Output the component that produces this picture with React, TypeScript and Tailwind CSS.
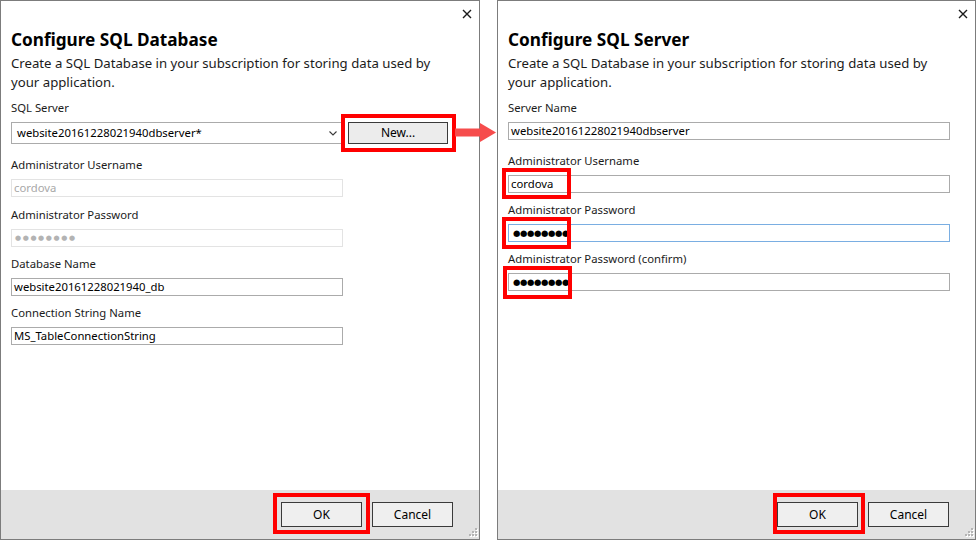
import React from "react";

const FONT = { fontFamily: '"Noto Sans", "Open Sans", sans-serif' };

function CloseX() {
  return (
    <svg width="10" height="10" viewBox="0 0 10 10" aria-hidden="true">
      <path d="M1 1 L9 9 M9 1 L1 9" stroke="#1a1a1a" strokeWidth="1.4" fill="none" />
    </svg>
  );
}

function Grip() {
  const dots: [number, number][] = [
    [9, 1],
    [6, 4],
    [9, 4],
    [3, 7],
    [6, 7],
    [9, 7],
  ];
  return (
    <svg className="absolute right-[1px] bottom-[1px]" width="12" height="11" viewBox="0 0 12 11" aria-hidden="true">
      {dots.map(([x, y], i) => (
        <g key={i}>
          <rect x={x + 1} y={y + 1} width="2" height="2" fill="#ffffff" />
          <rect x={x} y={y} width="2" height="2" fill="#b4b4b4" />
        </g>
      ))}
    </svg>
  );
}

function Label({ children, className = "" }: { children: React.ReactNode; className?: string }) {
  return (
    <div className={"h-[16px] leading-[16px] text-[11.3px] text-[#1b1b1b] whitespace-nowrap " + className}>
      {children}
    </div>
  );
}

function TextBox({
  children,
  className = "",
  disabled = false,
  focused = false,
}: {
  children: React.ReactNode;
  className?: string;
  disabled?: boolean;
  focused?: boolean;
}) {
  const border = disabled ? "border-[#e3e3e3]" : focused ? "border-[#7aaee2]" : "border-[#ababab]";
  const color = disabled ? "text-[#a8a8a8]" : "text-[#000000]";
  return (
    <div
      className={
        "mt-[6px] h-[18px] border bg-white flex items-center pl-[2px] text-[11.3px] leading-[16px] whitespace-nowrap " +
        border +
        " " +
        color +
        " " +
        className
      }
    >
      {children}
    </div>
  );
}

function Dots({ gray = false }: { gray?: boolean }) {
  return (
    <span
      className={gray ? "text-[#b3b3b3] text-[7px] tracking-[1.6px] pl-[1px]" : "text-black text-[8.5px] tracking-[-0.4px] pl-[2px]"}
      style={{ fontFamily: '"DejaVu Sans", sans-serif' }}
    >
      ●●●●●●●●
    </span>
  );
}

function RedBox({ className }: { className: string }) {
  return <div className={"absolute border-[4px] border-[#ff0000] box-border pointer-events-none " + className} />;
}

function Footer() {
  return (
    <div className="mt-auto h-[49px] bg-[#e2e2e2] flex justify-end items-start pt-[12px] pr-[26px] gap-[10px]">
      <button className="w-[81px] h-[25px] border border-[#3a3a3a] bg-[#efefef] text-[12px] text-black flex items-center justify-center" style={FONT}>
        OK
      </button>
      <button className="w-[81px] h-[25px] border border-[#3a3a3a] bg-[#efefef] text-[12px] text-black flex items-center justify-center" style={FONT}>
        Cancel
      </button>
    </div>
  );
}

function Header({ title }: { title: string }) {
  return (
    <>
      <div className="h-[27px] flex justify-end items-start pt-[8px] pr-[7px]">
        <CloseX />
      </div>
      <div className="px-[10px]">
        <div className="h-[24px] leading-[24px] text-[17.2px] font-bold text-black whitespace-nowrap">{title}</div>
        <div className="mt-[2px] text-[13.2px] leading-[19px] text-[#1b1b1b] w-[440px]">
          Create a SQL Database in your subscription for storing data used by your application.
        </div>
      </div>
    </>
  );
}

function LeftDialog() {
  return (
    <div className="relative w-[480px] h-[540px] border border-[#7c7c7c] bg-white flex flex-col shrink-0" style={FONT}>
      <Header title="Configure SQL Database" />
      <div className="px-[10px] mt-[8px]">
        <Label>SQL Server</Label>
        <div className="mt-[6px] flex items-center">
          <div className="w-[332px] h-[22px] border border-[#ababab] bg-white flex items-center justify-between pl-[5px] pr-[5px] text-[11.3px] text-black whitespace-nowrap">
            <span>website20161228021940dbserver*</span>
            <svg width="8" height="5" viewBox="0 0 8 5" aria-hidden="true">
              <path d="M0.5 0.5 L4 4 L7.5 0.5" stroke="#3a3a3a" strokeWidth="1.1" fill="none" />
            </svg>
          </div>
          <button className="ml-[5px] w-[100px] h-[22px] border border-[#3a3a3a] bg-[#ececec] text-[12px] text-black flex items-center justify-center" style={FONT}>
            New...
          </button>
        </div>
        <Label className="mt-[13px]">Administrator Username</Label>
        <TextBox className="w-[332px]" disabled>
          cordova
        </TextBox>
        <Label className="mt-[10px]">Administrator Password</Label>
        <TextBox className="w-[332px]" disabled>
          <Dots gray />
        </TextBox>
        <Label className="mt-[9px]">Database Name</Label>
        <TextBox className="w-[332px]">website20161228021940_db</TextBox>
        <Label className="mt-[9px]">Connection String Name</Label>
        <TextBox className="w-[332px]">MS_TableConnectionString</TextBox>
      </div>
      <Footer />
      <Grip />
      <RedBox className="left-[340px] top-[113px] w-[115px] h-[38px]" />
      <RedBox className="left-[272px] top-[492px] w-[97px] h-[41px]" />
    </div>
  );
}

function RightDialog() {
  return (
    <div className="relative w-[479px] h-[540px] border border-[#7c7c7c] bg-white flex flex-col shrink-0" style={FONT}>
      <Header title="Configure SQL Server" />
      <div className="px-[10px] mt-[8px]">
        <Label>Server Name</Label>
        <TextBox className="w-[442px]">website20161228021940dbserver</TextBox>
        <Label className="mt-[13px]">Administrator Username</Label>
        <TextBox className="w-[442px]">cordova</TextBox>
        <Label className="mt-[9px]">Administrator Password</Label>
        <TextBox className="w-[442px]" focused>
          <Dots />
        </TextBox>
        <Label className="mt-[9px]">Administrator Password (confirm)</Label>
        <TextBox className="w-[442px]">
          <Dots />
        </TextBox>
      </div>
      <Footer />
      <Grip />
      <RedBox className="left-[4px] top-[167px] w-[69px] h-[31px]" />
      <RedBox className="left-[4px] top-[216px] w-[69px] h-[32px]" />
      <RedBox className="left-[5px] top-[265px] w-[69px] h-[33px]" />
      <RedBox className="left-[275px] top-[492px] w-[92px] h-[41px]" />
    </div>
  );
}

export default function App() {
  return (
    <div className="relative w-[977px] h-[540px] bg-white flex overflow-hidden">
      <LeftDialog />
      <div className="w-[17px] shrink-0" />
      <RightDialog />
      <svg className="absolute left-[455px] top-[122px]" width="42" height="21" viewBox="0 0 42 21" aria-hidden="true">
        <rect x="0" y="6.5" width="27" height="8" fill="#f64c4c" />
        <path d="M25 1 L41 10.5 L25 20 Z" fill="#f64c4c" />
      </svg>
    </div>
  );
}
